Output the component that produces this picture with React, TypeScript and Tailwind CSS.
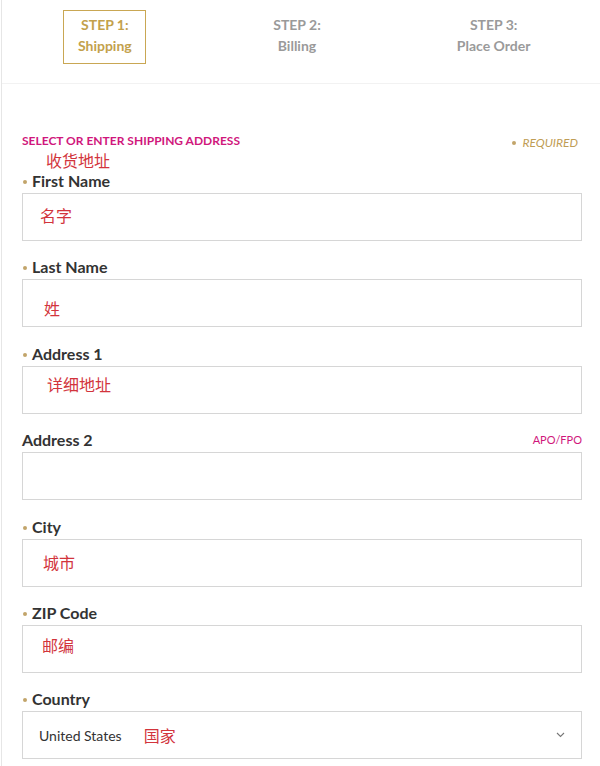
import React from "react";

const cjk = { fontFamily: '"Noto Sans CJK SC", sans-serif' };

function Label({ text, required = true, right }: { text: string; required?: boolean; right?: React.ReactNode }) {
  return (
    <div className="flex items-end justify-between h-[18px] mb-[3px]">
      <div className="flex items-center">
        {required && <span className="w-[4px] h-[4px] rounded-full bg-[#c2a46a] ml-[1px] mr-[5px] mt-[2px]" />}
        <span className="text-[16px] leading-[18px] font-bold text-[#333333]">{text}</span>
      </div>
      {right}
    </div>
  );
}

function Field({
  label,
  required = true,
  right,
  note,
  notePad,
  noteTop,
}: {
  label: string;
  required?: boolean;
  right?: React.ReactNode;
  note?: string;
  notePad: string;
  noteTop: string;
}) {
  return (
    <div className="mb-[17.4px]">
      <Label text={label} required={required} right={right} />
      <div className="h-[48px] border border-[#d6d6d6] bg-white">
        {note && (
          <div className={`${notePad} ${noteTop} text-[16px] leading-[20px] text-[#d2343c]`} style={cjk}>
            {note}
          </div>
        )}
      </div>
    </div>
  );
}

export default function App() {
  return (
    <div className="w-[600px] h-[766px] overflow-hidden bg-white" style={{ fontFamily: 'Lato, "Open Sans", sans-serif' }}>
      <div className="ml-[1px] h-full border-l border-[#e6e6e6]">
        <div className="h-[84px] border-b border-[#f2f2f2] grid grid-cols-3 pr-[8px]">
          <div className="flex justify-center pt-[10px] pl-[9px]">
            <div className="w-[83px] h-[54px] border border-[#c9a753] flex flex-col items-center pt-[3px] text-[14px] leading-[21px] font-bold text-[#c3a14c]">
              <span>STEP 1:</span>
              <span>Shipping</span>
            </div>
          </div>
          <div className="flex flex-col items-center pt-[14px] text-[14px] leading-[21px] font-bold text-[#9a9a9a]">
            <span>STEP 2:</span>
            <span>Billing</span>
          </div>
          <div className="flex flex-col items-center pt-[14px] text-[14px] leading-[21px] font-bold text-[#9a9a9a]">
            <span>STEP 3:</span>
            <span>Place Order</span>
          </div>
        </div>

        <div className="pl-[20px] pr-[18px] pt-[51px]">
          <div className="flex justify-between items-start h-[15px]">
            <span className="text-[12px] leading-[12px] font-bold text-[#d0177c]">SELECT OR ENTER SHIPPING ADDRESS</span>
            <span className="flex items-center text-[12px] leading-[15px] italic text-[#bf9d55] pr-[4px]">
              <span className="w-[4px] h-[4px] rounded-full bg-[#c2a46a] mr-[6px]" />
              REQUIRED
            </span>
          </div>
          <div className="h-[22px] pl-[24px] text-[16px] leading-[20px] text-[#d2343c]" style={cjk}>
            收货地址
          </div>
          <Field label="First Name" note="名字" notePad="pl-[17px]" noteTop="pt-[11px]" />
          <Field label="Last Name" note="姓" notePad="pl-[21px]" noteTop="pt-[18px]" />
          <Field label="Address 1" note="详细地址" notePad="pl-[24px]" noteTop="pt-[7px]" />
          <Field
            label="Address 2"
            required={false}
            right={<span className="text-[11px] leading-[14px] text-[#d0177c] mb-[2px]">APO/FPO</span>}
            notePad=""
            noteTop=""
          />
          <Field label="City" note="城市" notePad="pl-[20px]" noteTop="pt-[12px]" />
          <Field label="ZIP Code" note="邮编" notePad="pl-[19px]" noteTop="pt-[9px]" />
          <div>
            <Label text="Country" />
            <div className="h-[48px] border border-[#d6d6d6] bg-white flex items-center pl-[16px] pr-[16px]">
              <span className="text-[14px] text-[#333333]">United States</span>
              <span className="ml-[22px] text-[16px] leading-[20px] text-[#d2343c]" style={cjk}>国家</span>
              <svg className="ml-auto" width="9" height="6" viewBox="0 0 9 6">
                <polyline points="1,1 4.5,4.5 8,1" fill="none" stroke="#777" strokeWidth="1.1" />
              </svg>
            </div>
          </div>
        </div>
      </div>
    </div>
  );
}
